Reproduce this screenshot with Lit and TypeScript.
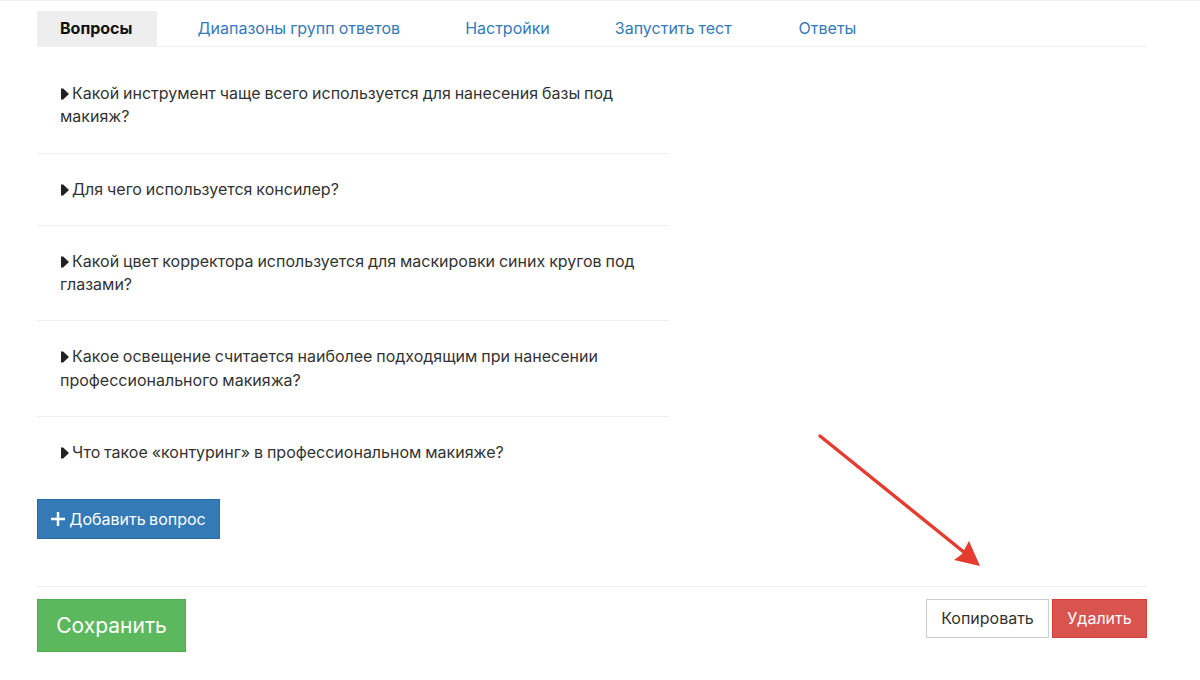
import { html, css, LitElement } from 'lit';
import { customElement } from 'lit/decorators.js';

const TABS = ['Вопросы', 'Диапазоны групп ответов', 'Настройки', 'Запустить тест', 'Ответы'];

const QUESTIONS = [
  'Какой инструмент чаще всего используется для нанесения базы под макияж?',
  'Для чего используется консилер?',
  'Какой цвет корректора используется для маскировки синих кругов под глазами?',
  'Какое освещение считается наиболее подходящим при нанесении профессионального макияжа?',
  'Что такое «контуринг» в профессиональном макияже?',
];

@customElement('app-root')
export class AppRoot extends LitElement {
  static styles = css`
    :host {
      display: block;
      position: relative;
      height: 680px;
      overflow: hidden;
      background: #fff;
      border-top: 1px solid #eee;
      box-sizing: border-box;
      padding: 10px 53px 0 37px;
      font-family: Inter, 'Noto Sans', sans-serif;
      font-size: 16px;
      color: #333;
    }
    .tabs {
      display: flex;
      gap: 19px;
      height: 36px;
      box-sizing: border-box;
      border-bottom: 1px solid #eee;
    }
    .tab {
      display: flex;
      align-items: center;
      height: 35px;
      box-sizing: border-box;
      padding: 0 23px 2px;
      word-spacing: -0.5px;
      color: #337ab7;
    }
    .tab:last-child {
      margin-left: 2px;
    }
    .tab.active {
      padding-right: 25px;
      margin-right: -2px;
      background: #eee;
      color: #111;
      font-weight: 700;
    }
    .list {
      width: 632px;
      margin-top: 11.1px;
    }
    .row {
      padding: 24px 23px;
      line-height: 23.25px;
      word-spacing: -0.6px;
      border-bottom: 1px solid #eee;
    }
    .row:last-child {
      border-bottom: none;
    }
    .caret {
      display: inline-block;
      width: 9px;
      height: 12px;
      margin-right: 3px;
      vertical-align: -1px;
    }
    .btn {
      display: inline-flex;
      align-items: center;
      justify-content: center;
      box-sizing: border-box;
      border: 1px solid transparent;
      font: inherit;
      padding: 0;
    }
    .add {
      width: 183px;
      height: 40px;
      margin-top: 10.9px;
      gap: 4px;
      background: #337ab7;
      border-color: #2e6da4;
      color: #fff;
      word-spacing: -1px;
    }
    .footer {
      display: flex;
      justify-content: space-between;
      align-items: flex-start;
      margin-top: 47px;
      padding-top: 12px;
      border-top: 1px solid #eee;
    }
    .save {
      width: 149px;
      height: 53px;
      background: #5cb85c;
      border-color: #4cae4c;
      color: #fff;
      font-size: 21px;
    }
    .actions {
      display: flex;
      gap: 3px;
    }
    .copy {
      width: 123px;
      height: 39px;
      background: #fff;
      border-color: #ccc;
      color: #333;
    }
    .delete {
      width: 95px;
      height: 39px;
      background: #d9534f;
      border-color: #d43f3a;
      color: #fff;
    }
    .arrow {
      position: absolute;
      left: 0;
      top: -1px;
      pointer-events: none;
    }
  `;

  render() {
    return html`
      <div class="tabs">
        ${TABS.map((t, i) => html`<div class="tab ${i === 0 ? 'active' : ''}">${t}</div>`)}
      </div>
      <div class="list">
        ${QUESTIONS.map(q => html`
          <div class="row">
            <svg class="caret" viewBox="0 0 9 12"><path d="M1 .5h2.2L9 6l-5.8 5.5H1z" fill="#222"/></svg>${q}
          </div>
        `)}
      </div>
      <button class="btn add">
        <svg width="14" height="14" viewBox="0 0 14 14"><path d="M5.8 0h2.4v5.8H14v2.4H8.2V14H5.8V8.2H0V5.8h5.8z" fill="#fff"/></svg>
        Добавить вопрос
      </button>
      <div class="footer">
        <button class="btn save">Сохранить</button>
        <div class="actions">
          <button class="btn copy">Копировать</button>
          <button class="btn delete">Удалить</button>
        </div>
      </div>
      <svg class="arrow" width="1200" height="680" viewBox="0 0 1200 680">
        <line x1="820" y1="436" x2="965" y2="553" stroke="#e53c2f" stroke-width="3.4" stroke-linecap="round"/>
        <path d="M980 566L954 560 962 554 969 541z" fill="#e53c2f"/>
      </svg>
    `;
  }
}
